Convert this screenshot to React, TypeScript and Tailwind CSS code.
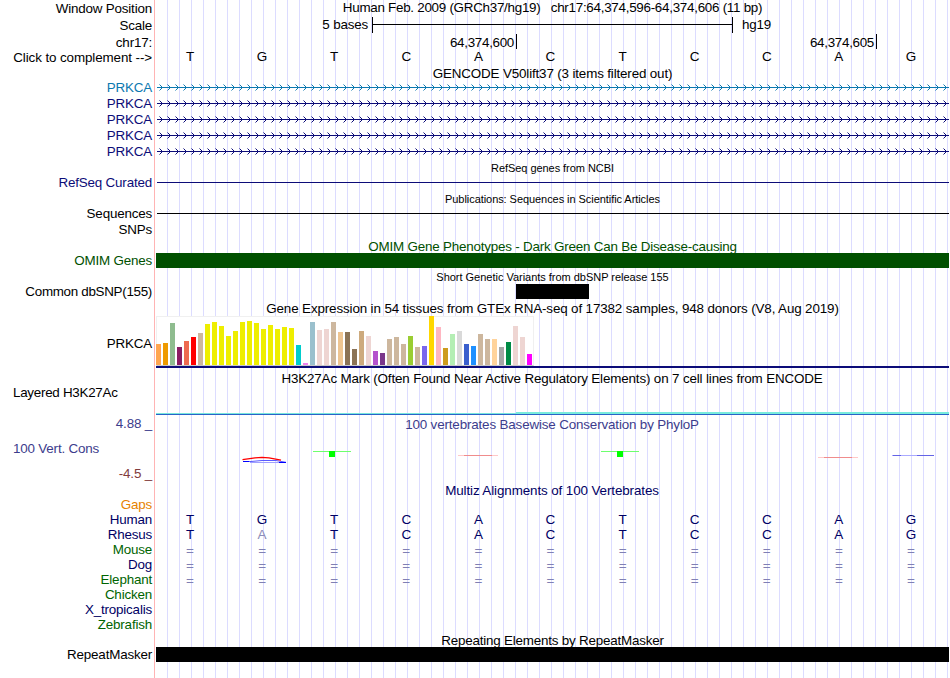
import type { ReactNode } from 'react';
import clsx from 'clsx';

const SEQUENCE = 'TGTCACTCCAG'.split('');
const RHESUS = 'TATCACTCCAG'.split('');

const GTEX_BARS: [number, string][] = [
  [21, '#ffa54f'], [22, '#ee9a00'], [42, '#8fbc8f'], [18, '#8b1c62'], [24, '#ee6a50'], [28, '#ff0000'],
  [32, '#cdb79e'], [41, '#eeee00'], [43, '#eeee00'], [39, '#eeee00'], [29, '#eeee00'], [34, '#eeee00'],
  [43, '#eeee00'], [44, '#eeee00'], [42, '#eeee00'], [36, '#eeee00'], [40, '#eeee00'], [36, '#eeee00'],
  [38, '#eeee00'], [37, '#eeee00'], [20, '#00cdcd'], [2, '#ee82ee'], [43, '#9ac0cd'], [35, '#eed5d2'],
  [36, '#eed5d2'], [43, '#cdb79e'], [33, '#eec591'], [33, '#8b7355'], [16, '#8b7355'], [34, '#cdaa7d'],
  [29, '#eed5d2'], [14, '#b452cd'], [12, '#7a378b'], [26, '#cdb79e'], [28, '#cdb79e'], [21, '#cdb79e'],
  [29, '#9acd32'], [18, '#cdb79e'], [19, '#7a67ee'], [49, '#ffd700'], [38, '#ffb6c1'], [17, '#cd9b1d'],
  [31, '#b4eeb4'], [34, '#d9d9d9'], [21, '#3a5fcd'], [19, '#1e90ff'], [31, '#cdb79e'], [26, '#cdb79e'],
  [26, '#ffd39b'], [18, '#a6a6a6'], [23, '#008b45'], [39, '#eed5d2'], [28, '#eed5d2'], [11, '#ff00ff'],
];

const GENES = ['text-[#0c78af]', 'text-[#0c0c78]', 'text-[#0c0c78]', 'text-[#0c0c78]', 'text-[#0c0c78]'];

const UNALIGNED = [
  { name: 'Mouse', color: 'text-[#006400]', bridged: true },
  { name: 'Dog', color: 'text-[#000064]', bridged: true },
  { name: 'Elephant', color: 'text-[#006400]', bridged: true },
  { name: 'Chicken', color: 'text-[#006400]', bridged: false },
  { name: 'X_tropicalis', color: 'text-[#000064]', bridged: false },
  { name: 'Zebrafish', color: 'text-[#006400]', bridged: false },
];

interface RowProps {
  height: string;
  label?: ReactNode;
  labelClass?: string;
  className?: string;
  children?: ReactNode;
}

function Row({ height, label, labelClass, className, children }: RowProps) {
  return (
    <div className={clsx('flex', height)}>
      <div className={clsx('w-[155px] shrink-0 border-r border-[#ffb4b4] pr-[2px] text-right', labelClass)}>
        {label}
      </div>
      <div
        className={clsx(
          'w-[794px] shrink-0 border-l border-white bg-[repeating-linear-gradient(to_right,transparent_0_11px,#dcdcff_11px_12px)]',
          className,
        )}
      >
        {children}
      </div>
    </div>
  );
}

function Title({ height, className, children }: { height: string; className?: string; children: ReactNode }) {
  return (
    <Row height={height} className={clsx('text-center', className)}>
      {children}
    </Row>
  );
}

function Bases({ bases, className }: { bases: string[]; className?: string }) {
  return (
    <div className={clsx('-ml-[2px] grid w-[793px] grid-cols-11 text-center text-[13.5px] tracking-normal', className)}>
      {bases.map((base, i) => (
        <span key={i} className={clsx(i === 1 && base === 'A' && 'text-[#8c8cb9]')}>
          {base}
        </span>
      ))}
    </div>
  );
}

function GeneLine({ id }: { id: string }) {
  return (
    <svg viewBox="156 0 793 16" className="block h-4 w-[793px]">
      <defs>
        <pattern id={id} x="157" y="0" width="8" height="16" patternUnits="userSpaceOnUse">
          <path d="M2.5 4.5 L5.5 7.5 L2.5 10.5" fill="none" stroke="currentColor" strokeWidth="1" />
        </pattern>
      </defs>
      <rect x="158" y="0" width="791" height="16" fill={`url(#${id})`} />
      <rect x="157" y="7" width="792" height="1" fill="currentColor" />
    </svg>
  );
}

function ConservationPlot() {
  return (
    <svg viewBox="156 434 793 50" className="block h-[50px] w-[793px]" fill="none">
      <path d="M250 462.5 H286" stroke="#a0a0ff" />
      <path d="M243 461.5 H251 L262 460.5 H276 L286 462.3" stroke="#5a5aff" />
      <path d="M243 461.5 H249 M279 462.5 H286" stroke="#0000ff" strokeWidth="1.2" />
      <path d="M242.5 459.7 L255 457.8 L262 457.3 L269 457.9 L281 460.2" stroke="#ff0000" strokeWidth="1.3" />
      <path d="M313 451.5 H351 M601 451.5 H639" stroke="#6eff6e" />
      <path d="M329 451 h6 v6 h-6 Z M617 451 h6 v6 h-6 Z" fill="#00ff00" />
      <path d="M458 455.5 H498" stroke="#ffc8c8" />
      <path d="M464 455.5 H492 M824 457.5 H852" stroke="#f08c8c" />
      <path d="M818 457.5 H824 M852 457.5 H858" stroke="#ffc8c8" />
      <path d="M892 455.5 H934" stroke="#aaaaff" />
      <path d="M893 455.5 H901 M917 455.5 H934" stroke="#6464e6" />
    </svg>
  );
}

export default function App() {
  return (
    <div className="h-[678px] w-[950px] overflow-hidden bg-white font-['Liberation_Sans',Arial,sans-serif] text-[13.4px] leading-[15px] tracking-[-0.18px] whitespace-pre text-black">
      {/* Position and scale */}
      <Row height="h-[17px]" label="Window Position" labelClass="pt-px" className="text-center tracking-[-0.27px]">
        {'Human Feb. 2009 (GRCh37/hg19)   chr17:64,374,596-64,374,606 (11 bp)'}
      </Row>
      <Row height="h-[17px]" label="Scale" labelClass="pt-px" className="flex">
        <span className="w-[212px] text-right">5 bases</span>
        <div className="ml-1 flex h-4 w-[361px] items-center border-x border-black">
          <div className="-mt-px h-px w-full bg-black" />
        </div>
        <span className="ml-[9px]">hg19</span>
      </Row>
      <Row height="h-4" label="chr17:" labelClass="pt-px" className="flex tracking-[-0.3px]">
        <div className="h-[15px] w-[361px] border-r border-black pt-px pr-[2px] text-right">64,374,600</div>
        <div className="h-[15px] w-[360px] border-r border-black pt-px pr-[2px] text-right">64,374,605</div>
      </Row>
      <Row height="h-4" label="Click to complement -->" labelClass="tracking-[-0.1px]">
        <Bases bases={SEQUENCE} className="-mt-px" />
      </Row>

      {/* Genes */}
      <Title height="h-[14px]" className="tracking-[-0.15px]">GENCODE V50lift37 (3 items filtered out)</Title>
      {GENES.map((color, i) => (
        <Row key={i} height="h-4" label="PRKCA" labelClass={color} className={color}>
          <GeneLine id={`exon-${i}`} />
        </Row>
      ))}
      <Title height="h-[15px]" className="pt-px text-[11px] tracking-[-0.05px]">RefSeq genes from NCBI</Title>
      <Row height="h-4" label="RefSeq Curated" labelClass="text-[#0c0c78]">
        <div className="mt-[7px] ml-px h-px bg-[#0c0c78]" />
      </Row>
      <Title height="h-[15px]" className="pt-px text-[11px] tracking-[-0.06px]">
        Publications: Sequences in Scientific Articles
      </Title>
      <Row height="h-4" label="Sequences">
        <div className="mt-[7px] ml-px h-px bg-black" />
      </Row>
      <Row height="h-4" label="SNPs" />

      {/* Variants */}
      <Title height="h-[15px]" className="pt-px tracking-[-0.2px] text-[#005000]">
        OMIM Gene Phenotypes - Dark Green Can Be Disease-causing
      </Title>
      <Row height="h-[15px]" label="OMIM Genes" labelClass="text-[#005000]">
        <div className="h-[15px] bg-[#005000]" />
      </Row>
      <Title height="h-4" className="pt-[2px] text-[11px] tracking-[-0.02px]">
        Short Genetic Variants from dbSNP release 155
      </Title>
      <Row height="h-[15px]" label="Common dbSNP(155)" labelClass="tracking-[-0.3px]">
        <div className="ml-[360px] h-[15px] w-[73px] bg-black" />
      </Row>

      {/* Expression */}
      <Title height="h-[17px]" className="pt-[2px] tracking-[-0.13px]">
        Gene Expression in 54 tissues from GTEx RNA-seq of 17382 samples, 948 donors (V8, Aug 2019)
      </Title>
      <Row height="h-[54px]" label="PRKCA" labelClass="pt-5">
        <div className="flex h-[50px] w-[378px] items-end gap-[2px] border border-[#f0f0f0] border-b-[#c8c8c8] bg-white">
          {GTEX_BARS.map(([height, color], i) => (
            <div
              key={i}
              className={clsx('w-[5px] shrink-0', i === 0 && '-ml-px')}
              style={{ height, backgroundColor: color }}
            />
          ))}
        </div>
        <div className="h-[2px] bg-[#0c0c78]" />
      </Row>

      {/* Regulation */}
      <Title height="h-[15px]" className="pt-px pr-px tracking-[-0.145px]">
        H3K27Ac Mark (Often Found Near Active Regulatory Elements) on 7 cell lines from ENCODE
      </Title>
      <Row height="h-[30px]" label="Layered H3K27Ac" labelClass="pl-[13px] !text-left tracking-[-0.27px]">
        <svg viewBox="156 385 793 30" className="block h-[30px] w-[793px]">
          <rect x="156" y="413" width="360" height="1" fill="#78e6dc" />
          <rect x="516" y="412" width="433" height="2" fill="#78ebdc" />
          <rect x="156" y="414" width="793" height="1" fill="#2864c8" />
        </svg>
      </Row>

      {/* Conservation */}
      <Row
        height="h-[69px]"
        labelClass="text-[#3c3c8c]"
        label={
          <div className="flex flex-col">
            <span className="pt-px">4.88 _</span>
            <span className="pt-[10px] pl-[13px] text-left">100 Vert. Cons</span>
            <span className="pt-[10px] text-[#823c3c]">-4.5 _</span>
          </div>
        }
      >
        <div className="h-[19px] pt-[2px] pr-px text-center tracking-[-0.15px] text-[#3c3c8c]">
          100 vertebrates Basewise Conservation by PhyloP
        </div>
        <ConservationPlot />
      </Row>
      <Title height="h-[13px]" className="-mt-px pr-px tracking-[-0.1px] text-[#000064]">
        Multiz Alignments of 100 Vertebrates
      </Title>
      <Row height="h-[15px]" label="Gaps" labelClass="text-[#e68200]" />
      <Row height="h-[15px]" label="Human" labelClass="text-[#000064]" className="text-[#000064]">
        <Bases bases={SEQUENCE} />
      </Row>
      <Row height="h-[15px]" label="Rhesus" labelClass="text-[#000064]" className="text-[#000064]">
        <Bases bases={RHESUS} />
      </Row>
      {UNALIGNED.map(({ name, color, bridged }) => (
        <Row key={name} height="h-[15px]" label={name} labelClass={color} className="text-[#8080b4]">
          {bridged && <Bases bases={Array(11).fill('=')} className="pt-px" />}
        </Row>
      ))}

      {/* Repeats */}
      <Title height="h-[15px]" className="pt-px tracking-[-0.2px]">Repeating Elements by RepeatMasker</Title>
      <Row height="h-[15px]" label="RepeatMasker">
        <div className="h-[15px] bg-black" />
      </Row>
      <Row height="h-4" />
    </div>
  );
}
